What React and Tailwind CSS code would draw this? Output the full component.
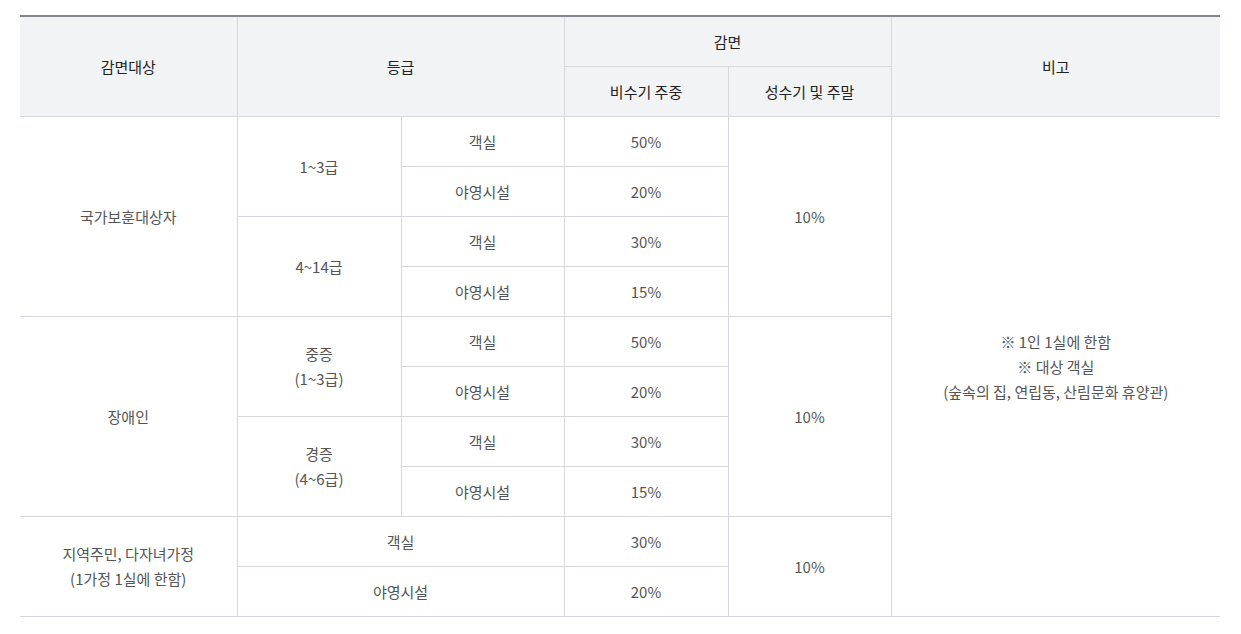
import React from 'react';

const th = 'h-[50px] border border-[#d7d7de] bg-[#f2f3f5] font-normal text-[#222] text-center align-middle';
const td = 'h-[50px] border border-[#d7d7de] text-[#555] text-center align-middle';

const groups = [
  {
    target: '국가보훈대상자',
    peak: '10%',
    grades: [
      { label: ['1~3급'], rows: [['객실', '50%'], ['야영시설', '20%']] },
      { label: ['4~14급'], rows: [['객실', '30%'], ['야영시설', '15%']] }
    ]
  },
  {
    target: '장애인',
    peak: '10%',
    grades: [
      { label: ['중증', '(1~3급)'], rows: [['객실', '50%'], ['야영시설', '20%']] },
      { label: ['경증', '(4~6급)'], rows: [['객실', '30%'], ['야영시설', '15%']] }
    ]
  }
];

const App = () => {
  return (
    <div className="min-h-screen bg-white pt-[15px] px-[20px] font-['Noto_Sans_CJK_KR','Noto_Sans',sans-serif] text-[15px] leading-[25px]">
      <table className="w-[1200px] table-fixed border-collapse border-t-2 border-t-[#86868e] [&_td:first-child]:border-l-0 [&_th:first-child]:border-l-0">
        <colgroup>
          <col className="w-[217px]" />
          <col className="w-[164px]" />
          <col className="w-[163px]" />
          <col className="w-[164px]" />
          <col className="w-[163px]" />
          <col className="w-[329px]" />
        </colgroup>
        <thead>
          <tr>
            <th rowSpan={2} className={`${th} border-t-0`}>감면대상</th>
            <th rowSpan={2} colSpan={2} className={`${th} border-t-0`}>등급</th>
            <th colSpan={2} className={`${th} border-t-0`}>감면</th>
            <th rowSpan={2} className={`${th} border-t-0 border-r-0`}>비고</th>
          </tr>
          <tr>
            <th className={th}>비수기 주중</th>
            <th className={th}>성수기 및 주말</th>
          </tr>
        </thead>
        <tbody>
          {groups.map((g, gi) =>
            g.grades.map((grade, ri) =>
              grade.rows.map((row, rj) => (
                <tr key={`${gi}-${ri}-${rj}`}>
                  {ri === 0 && rj === 0 && (
                    <td rowSpan={4} className={td}>{g.target}</td>
                  )}
                  {rj === 0 && (
                    <td rowSpan={2} className={td}>
                      {grade.label.map((l) => (
                        <div key={l}>{l}</div>
                      ))}
                    </td>
                  )}
                  <td className={td}>{row[0]}</td>
                  <td className={td}>{row[1]}</td>
                  {ri === 0 && rj === 0 && (
                    <td rowSpan={4} className={td}>{g.peak}</td>
                  )}
                  {gi === 0 && ri === 0 && rj === 0 && (
                    <td rowSpan={10} className={`${td} border-r-0`}>
                      <div>※ 1인 1실에 한함</div>
                      <div>※ 대상 객실</div>
                      <div>(숲속의 집, 연립동, 산림문화 휴양관)</div>
                    </td>
                  )}
                </tr>
              ))
            )
          )}
          <tr>
            <td rowSpan={2} className={td}>
              <div>지역주민, 다자녀가정</div>
              <div>(1가정 1실에 한함)</div>
            </td>
            <td colSpan={2} className={td}>객실</td>
            <td className={td}>30%</td>
            <td rowSpan={2} className={td}>10%</td>
          </tr>
          <tr>
            <td colSpan={2} className={td}>야영시설</td>
            <td className={td}>20%</td>
          </tr>
        </tbody>
      </table>
    </div>
  );
};

export default App;
